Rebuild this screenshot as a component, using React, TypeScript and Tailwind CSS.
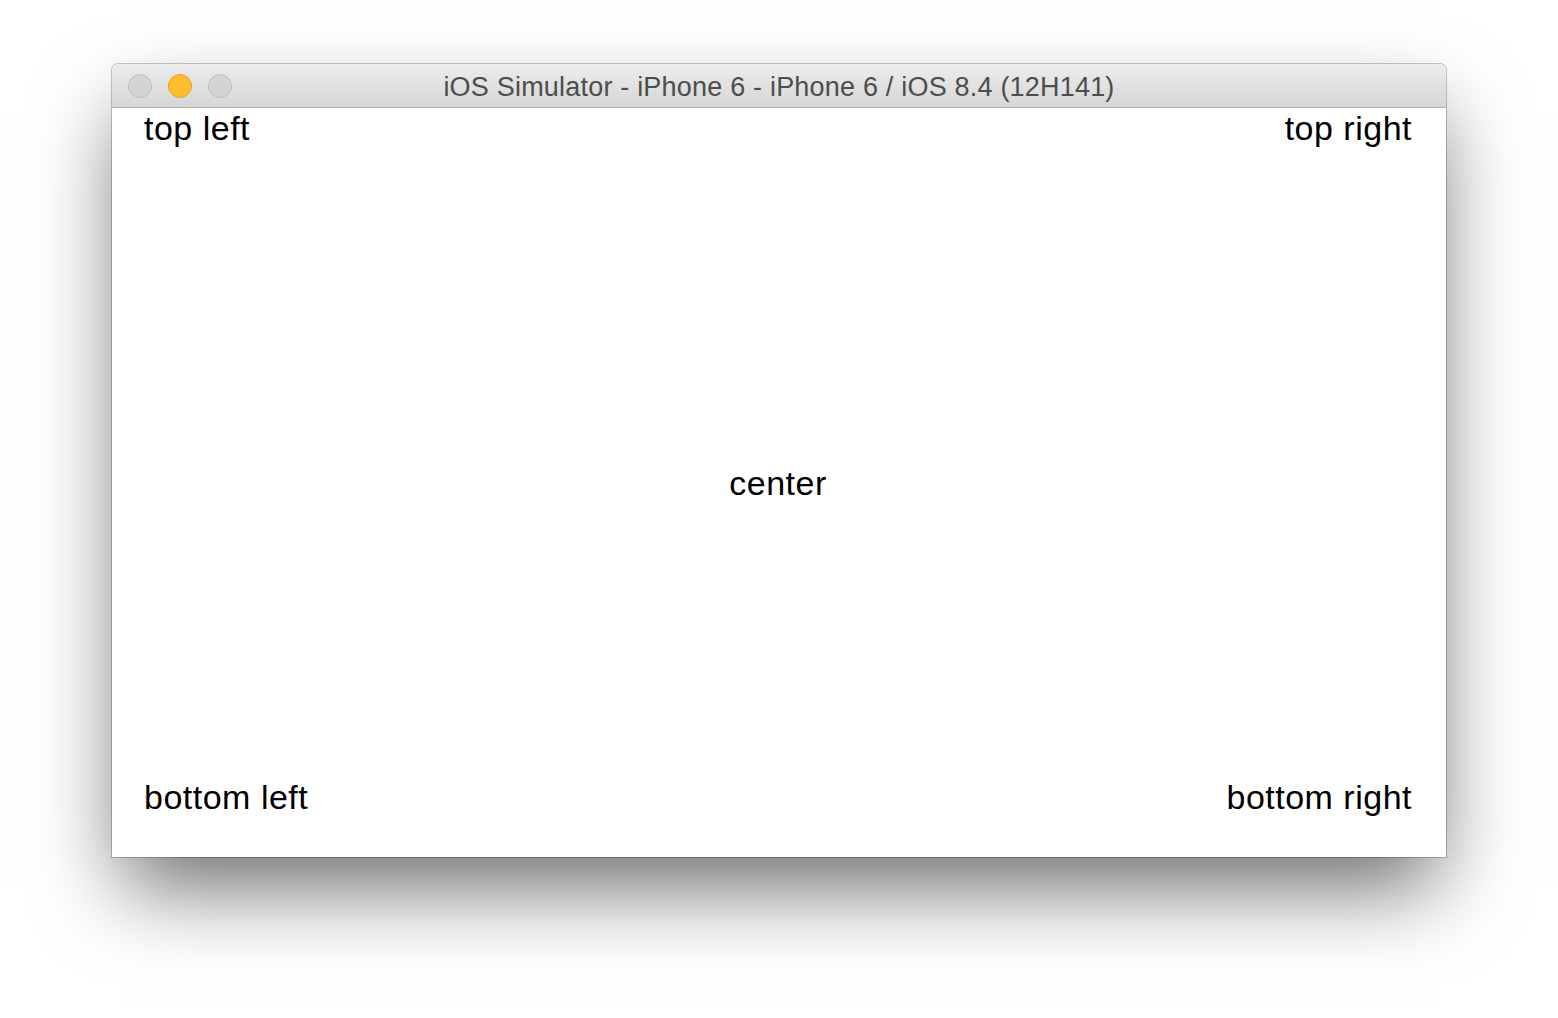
import React from 'react';

const Light: React.FC<{ tone: 'gray' | 'yellow' }> = ({ tone }) => (
  <span
    className={
      tone === 'yellow'
        ? 'block w-[24px] h-[24px] rounded-full bg-[#ffbd2e] border border-[#e2a325]'
        : 'block w-[24px] h-[24px] rounded-full bg-[#d4d4d4] border border-[#bebebe]'
    }
  />
);

export default function App() {
  return (
    <div
      className="min-h-[1018px] w-full bg-white pt-[64px] pl-[112px]"
      style={{ fontFamily: '"Liberation Sans", Arial, sans-serif' }}
    >
      {/* Simulator window */}
      <div className="w-[1334px] rounded-t-[6px] bg-white shadow-[0_0_0_1px_rgba(0,0,0,0.22),0_40px_80px_-10px_rgba(0,0,0,0.58)]">
        {/* Title bar */}
        <div className="relative h-[43px] flex items-center rounded-t-[6px] bg-gradient-to-b from-[#ededed] to-[#d6d6d6]">
          <div className="flex items-center gap-[16px] pl-[16px] pt-[1px]">
            <Light tone="gray" />
            <Light tone="yellow" />
            <Light tone="gray" />
          </div>
          <div className="absolute inset-0 flex items-center justify-center text-[27px] tracking-[0.2px] text-[#4d4d4d] leading-none pt-[4px]">
            iOS Simulator - iPhone 6 - iPhone 6 / iOS 8.4 (12H141)
          </div>
        </div>
        <div className="h-px bg-[#b1b1b1]" />

        {/* Screen */}
        <div className="h-[749px] flex flex-col text-[34px] tracking-[0.5px] text-black leading-[37px]">
          <div className="h-[78px] flex items-start justify-between pt-[2px] pl-[32px] pr-[34px]">
            <span>top left</span>
            <span>top right</span>
          </div>
          <div className="flex-1 flex items-center justify-center pr-[2px] pt-[1px]">
            <span>center</span>
          </div>
          <div className="h-[78px] flex items-start justify-between pl-[32px] pr-[34px]">
            <span>bottom left</span>
            <span>bottom right</span>
          </div>
        </div>
      </div>
    </div>
  );
}
